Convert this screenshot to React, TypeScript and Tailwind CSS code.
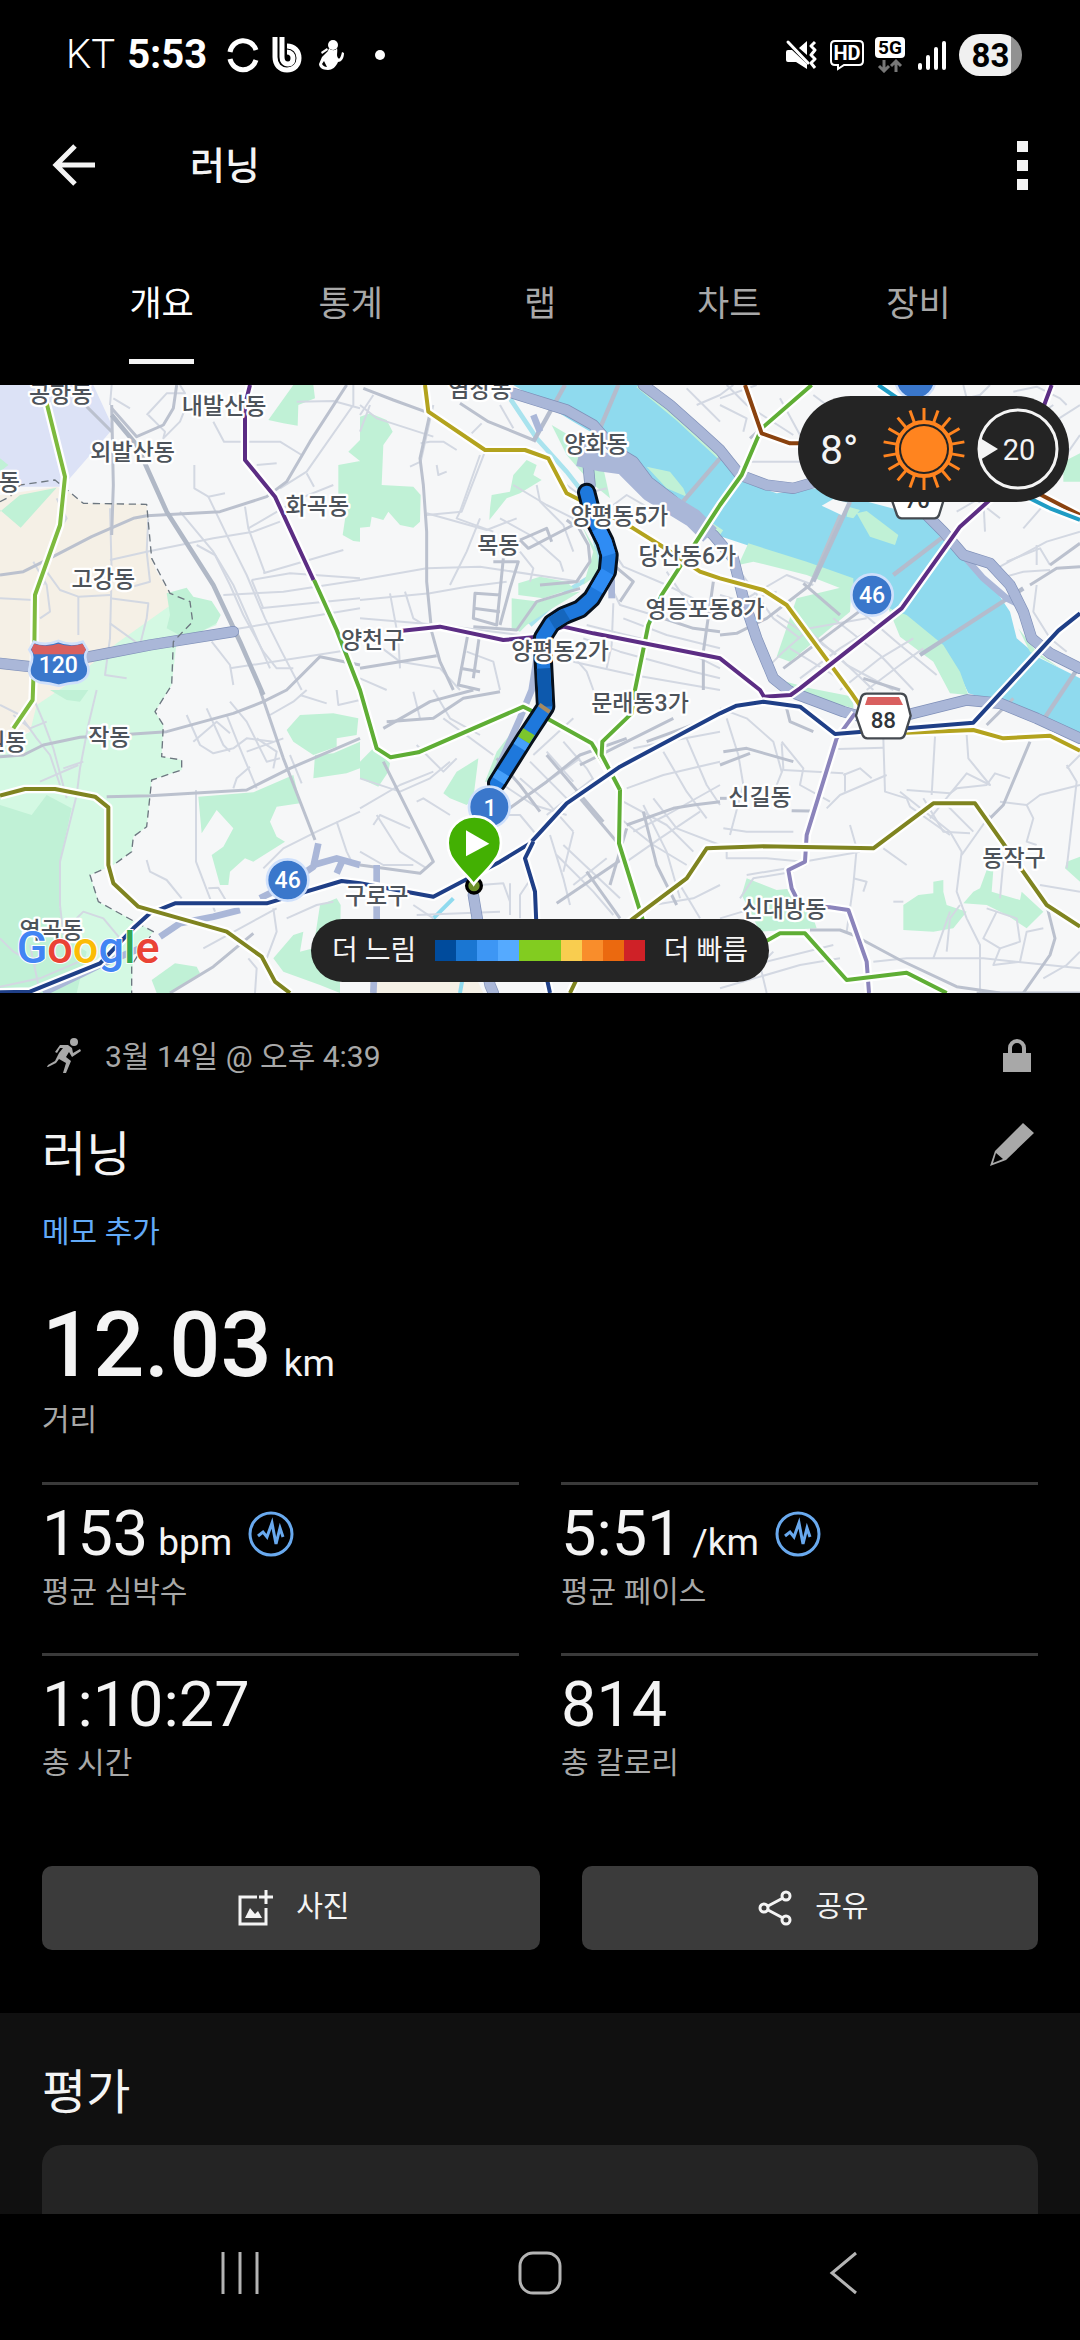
import { useState } from 'react';

type Stat = {
  label: string;
  value: string;
  unit?: string;
  hasChart?: boolean;
};

type MapLine = { color: string; points: string };
type MapLabel = { x: number; y: number; text: string };

const tabs = ['개요', '통계', '랩', '차트', '장비'];

const stats: Stat[] = [
  { label: '평균 심박수', value: '153', unit: 'bpm', hasChart: true },
  { label: '평균 페이스', value: '5:51', unit: '/km', hasChart: true },
  { label: '총 시간', value: '1:10:27' },
  { label: '총 칼로리', value: '814' },
];

const paceColors = [
  'bg-[#004b9c]',
  'bg-[#1a76d2]',
  'bg-[#3d96f4]',
  'bg-[#55aaff]',
  'bg-[#82cc20]',
  'bg-[#82cc20]',
  'bg-[#f9cd4f]',
  'bg-[#f98d2b]',
  'bg-[#eb690f]',
  'bg-[#cf2127]',
];

// Map geometry is drawn on a 3240 x 1824 canvas.
const parks = [
  '805,105 880,0 940,0 945,40 895,60 893,122 850,115',
  '1045,200 1080,165 1080,470 1060,468 1028,450 1040,370 1015,330 1015,240 1080,228',
  '1080,95 1110,85 1160,105 1178,140 1150,180 1145,300 1240,305 1262,330 1260,410 1240,428 1200,420 1165,380 1150,405 1115,395 1110,425 1080,428',
  '1470,370 1475,330 1530,320 1540,270 1580,225 1610,240 1600,270 1625,285 1560,325 1520,340 1468,405',
  '1555,595 1620,575 1700,590 1720,610 1630,640 1555,630',
  '1535,640 1620,650 1700,625 1740,620 1640,680 1580,720 1560,740 1535,730',
  '860,1035 900,990 1000,985 1075,1000 1070,1050 1010,1060 1010,1085 940,1110 880,1070',
  '945,1110 1000,1105 1080,1070 1080,1150 1040,1165 940,1180',
  '595,1235 760,1222 880,1170 895,1230 900,1255 830,1265 810,1310 830,1355 855,1370 760,1430 735,1420 690,1460 685,1500 660,1500 635,1410 670,1385 700,1330 650,1275 605,1345',
  '820,1720 880,1650 910,1640 900,1700 940,1690 960,1560 1010,1540 1022,1560 1020,1700 1020,1824 960,1800 850,1760',
  '455,1785 525,1735 590,1745 600,1765 510,1824 470,1824',
  '1080,1130 1120,1090 1170,1135 1165,1160 1135,1205 1080,1180',
  '1330,1225 1370,1160 1435,1120 1420,1240 1400,1260 1350,1240',
  '1455,1190 1490,1100 1560,1010 1530,1090 1480,1190',
  '1655,120 1740,170 1810,250 1830,340 1770,290 1700,210',
  '1745,420 1790,500 1800,560 1750,600 1780,500',
  '1940,245 2010,260 2050,310 2060,335 2000,310',
  '2245,475 2420,530 2560,580 2560,625 2420,570 2260,530 2215,540',
  '2390,640 2555,600 2550,680 2370,830 2330,815',
  '2570,385 2600,378 2695,450 2685,480 2610,455',
  '2545,365 2580,375 2560,400 2540,395',
  '2665,670 2720,690 2830,780 2880,860 2905,930 2850,925 2800,830 2700,755',
  '3055,730 3110,800 3180,850 3090,800',
  '3190,230 3240,205 3240,290 3190,290',
  '2320,880 2430,910 2560,935 2560,970 2400,930',
  '2225,1530 2240,1480 2330,1515 2385,1510 2440,1600 2450,1630 2280,1640',
  '2710,1560 2755,1530 2800,1525 2800,1490 2830,1485 2830,1520 2840,1560 2900,1580 2860,1630 2800,1640 2710,1635',
  '2890,1555 2920,1520 2940,1510 2960,1455 2980,1455 2975,1520 3060,1545 3065,1520 3130,1580 3080,1630 3020,1590 2960,1560',
  '3200,1430 3240,1415 3240,1490 3195,1450',
];

const minorRoads = [
  '440,90 500,25 555,25 540,0',
  '445,90 495,140 490,160 540,110 560,60',
  '640,110 672,170 840,170 905,210',
  '890,50 1000,48 1080,70',
  '770,240 830,235',
  '1060,0 1060,60 920,260 840,310',
  '920,265 942,305',
  '583,240 583,310 625,335 675,325',
  '625,335 690,470 740,570 795,700 845,800 905,915',
  '330,525 440,500 540,480 640,460 760,440 840,410',
  '735,365 745,430 795,565',
  '745,430 900,340 1000,300',
  '790,565 1030,495',
  '755,585 870,565 1080,580',
  '670,630 850,620 1080,585',
  '780,670 1080,640',
  '690,735 780,720 1080,670',
  '690,850 1080,790',
  '540,380 640,500 700,600 810,850',
  '635,770 690,840 700,900',
  '590,480 645,510 690,600 730,690 790,800 830,850 880,850',
  '755,585 790,670',
  '330,370 335,560 330,760 315,870 380,880',
  '140,560 180,615 235,635 330,630',
  '235,635 235,750',
  '330,640 445,655 440,700 420,780 330,715',
  '445,400 440,500 450,590 380,610',
  '0,640 100,645',
  '100,530 140,600 150,680 120,700',
  '330,60 335,0',
  '340,40 390,70',
  '170,340 200,400 150,480 130,600',
  '290,915 265,1020 240,1150 230,1230 180,1430 180,1560 190,1650',
  '0,960 60,990 110,1060 150,1110 180,1200',
  '90,915 130,1010 160,1090 200,1240',
  '40,990 90,1030 140,1010',
  '120,1190 235,1140',
  '190,1150 250,1130',
  '560,990 600,1080 640,1105 700,1090 740,1060 820,1070',
  '620,970 670,1080 690,1100',
  '580,1070 650,1010 690,1045',
  '680,990 720,1090 770,1210',
  '690,950 740,1010 800,1130 840,1120',
  '770,1060 830,1100 820,1150',
  '740,1100 850,1060',
  '810,990 880,950 920,915',
  '700,1210 710,1180 750,1145',
  '900,930 980,955',
  '1010,915 1015,960 1080,945',
  '588,1215 588,1430 630,1540 645,1580',
  '440,1425 450,1460 500,1485 545,1540',
  '625,1510 655,1508 680,1550',
  '870,1110 905,1195',
  '1010,1310 1040,1400 1060,1440',
  '790,1450 850,1390 950,1340 1080,1280',
  '610,1690 830,1570',
  '820,1570 830,1640 800,1720',
  '745,1720 770,1750 765,1824',
  '90,1680 120,1824',
  '0,1805 120,1780 260,1720',
  '190,1640 250,1580 310,1600 360,1660',
  '0,1660 40,1700 110,1740',
  '860,1600 950,1560 1000,1550',
  '1080,60 1130,100 1300,155',
  '1230,245 1262,230 1300,60',
  '1370,195 1330,170 1290,170 1262,175',
  '1310,240 1315,270 1340,260',
  '1415,145 1445,115',
  '1455,200 1385,380 1280,390',
  '1280,385 1460,435 1550,400',
  '1440,210 1380,380 1370,400 1480,440',
  '1080,585 1280,550 1440,545 1740,590',
  '1080,645 1290,625 1400,605 1520,590',
  '1080,700 1320,720 1560,750',
  '1080,740 1200,830 1320,850 1380,915',
  '1170,625 1195,760 1200,850',
  '1215,620 1240,700 1290,730',
  '1440,400 1400,500 1350,600',
  '1540,300 1640,360 1720,400',
  '1610,300 1620,350 1690,420 1720,500',
  '1500,400 1590,450 1680,530 1690,560',
  '1560,500 1600,550 1590,590',
  '1080,880 1160,915',
  '1400,800 1480,830 1500,915',
  '1120,30 1080,90',
  '1500,60 1540,130',
  '1080,140 1110,60',
  '1700,300 1740,330 1820,310',
  '1840,360 1880,330 2000,400',
  '1840,500 1870,545 2000,600 2080,640',
  '1830,600 1860,660 1960,690',
  '1840,655 1835,780 1820,850',
  '1870,700 2000,750 2160,790',
  '1760,720 1840,740 2000,780 2060,800 2160,850',
  '1690,780 1760,860 1780,915',
  '1750,760 1860,800 2080,860 2160,880',
  '1720,830 1900,870 2160,915',
  '2000,560 2040,620 2100,700',
  '2060,10 2110,60 2160,110',
  '2090,60 2160,30 2200,0',
  '2160,60 2240,100 2230,140',
  '2160,40 2270,0',
  '2180,0 2240,60 2380,150',
  '2340,40 2400,150 2450,210',
  '2440,30 2520,90',
  '2250,230 2400,230 2470,240',
  '2890,0 2900,40 2940,30 2970,0',
  '3040,20 3110,5 3180,40 3200,60',
  '3080,60 3130,80 3160,60',
  '3130,130 3240,60',
  '3170,250 3240,150',
  '2950,340 2955,440',
  '2870,380 2930,345 3000,400',
  '3070,430 3140,350',
  '2990,550 3140,470 3240,440',
  '3020,530 3120,490 3150,540',
  '3110,480 3110,540',
  '3110,600 3100,680 3150,760 3200,800',
  '3040,620 3000,580 3070,560 3150,555',
  '2220,560 2250,600 2320,700 2400,760',
  '2240,640 2360,570 2440,600',
  '2200,540 2230,620 2260,760',
  '2160,630 2230,650 2330,620',
  '2330,690 2500,800 2620,915',
  '2370,790 2500,870 2560,915',
  '2430,740 2540,840 2680,915',
  '2500,700 2640,810 2740,915',
  '2560,660 2700,780 2810,870',
  '2300,850 2350,800 2430,730 2600,700',
  '2400,880 2520,790 2680,690',
  '2520,915 2640,820 2740,760',
  '2600,915 2700,840 2770,790',
  '2180,1000 2215,1110 2230,1200 2190,1350',
  '2160,970 2240,1000 2320,1070 2345,1160',
  '2345,1075 2350,1150 2330,1200 2360,1240',
  '2345,1070 2410,1150 2400,1200 2490,1250',
  '2350,1155 2530,1165',
  '2515,1092 2650,1088',
  '2530,1170 2580,1150 2615,1180',
  '2535,1165 2535,1220',
  '2650,1060 2655,1220 2720,1240 2730,1265 2850,1350',
  '2805,1055 2795,1230',
  '2900,1050 2905,1120 2970,1200 2900,1165 2790,1300',
  '2480,1270 2520,1230 2660,1170',
  '2720,1215 2850,1225 2870,1210 2960,1200 2985,1165 3030,1180',
  '2770,1240 2830,1340 2910,1345',
  '2840,1260 2920,1340',
  '2700,1220 2850,1340 2885,1400 2870,1520 2900,1600 2940,1680 2940,1824',
  '2970,1290 2885,1410',
  '3000,1250 3080,1260 3120,1230 3240,1200',
  '3080,1260 3100,1300 3080,1370 3110,1380',
  '3200,1150 3240,1110',
  '3200,1140 3230,1190 3200,1450',
  '2550,1320 2570,1390 2560,1500 2540,1640',
  '2170,1330 2240,1340 2380,1340',
  '2180,1400 2180,1420 2300,1420 2410,1430 2580,1400',
  '2240,1470 2300,1460 2420,1440',
  '2560,1480 2600,1490 2590,1520',
  '2650,1390 2720,1440',
  '2220,1540 2260,1480 2380,1460',
  '2160,1600 2260,1570 2280,1560',
  '2160,1810 2400,1740 2520,1720',
  '2220,1750 2500,1680',
  '2620,1730 2720,1720 2950,1720 3240,1750',
  '2990,1580 2950,1660 3000,1690 3060,1670 3050,1600 2960,1570',
  '3000,1690 2980,1740 3060,1730 3080,1640 3130,1630',
  '3120,1500 3240,1520',
  '3130,1780 3200,1740 3240,1700',
  '2840,1700 2850,1600 2880,1560',
  '2850,1580 2800,1720',
  '2680,1550 2710,1550',
  '2300,1824 2280,1740 2320,1700',
  '3010,1430 3000,1540',
  '1120,1320 1140,1290 1230,1330',
  '1130,1290 1200,1400 1280,1450',
  '1080,1270 1200,1200 1300,1160',
  '1080,1180 1200,1220 1290,1180 1350,1130',
  '1250,1250 1270,1240 1350,1290',
  '1330,1000 1480,1110',
  '1250,1080 1330,1160 1370,1120',
  '1240,920 1260,1000',
  '1300,915 1350,1000 1440,1050',
  '1490,1290 1560,1290 1610,1350',
  '1510,1200 1600,1260 1700,1290',
  '1560,1180 1640,1250 1720,1340',
  '1590,1130 1700,1240',
  '1640,1100 1720,1190',
  '1690,1070 1760,1150 1790,1200',
  '1600,1220 1740,1120',
  '1640,1290 1780,1180',
  '1720,1000 1600,1110',
  '1670,1410 1780,1520 1840,1590',
  '1690,1380 1860,1540',
  '1600,1470 1560,1530 1560,1600',
  '1440,1500 1510,1495 1530,1550',
  '1530,1495 1530,1590',
  '1650,1350 1690,1480 1710,1560',
  '1720,1340 1690,1460',
  '1860,1300 1960,1380 2060,1440',
  '1870,1250 2000,1320 2080,1400',
  '1930,1260 2000,1400 2040,1540',
  '1900,1340 2000,1290 2160,1200',
  '1880,1430 1980,1360 2100,1280',
  '1960,1240 2030,1330 2160,1380',
  '1880,1210 1990,1170 2160,1130',
  '1990,1100 2060,1220 2120,1300',
  '1900,1090 2000,1070 2160,1040',
  '2060,1060 2120,1200 2160,1260',
  '1080,1400 1150,1440 1240,1440',
  '1960,1560 2080,1540 2160,1500',
  '2040,1500 2100,1600',
  '1720,1500 1820,1420',
  '1250,1590 1500,1580',
  '1240,1560 1300,1600',
];

const majorRoads = [
  '260,65 335,140',
  '335,60 340,300 335,450',
  '335,70 410,155 490,120 520,70 530,0',
  '0,570 70,560 130,530 275,455 400,400 440,392 660,380 800,335 860,290 930,170 1040,0',
  '0,1115 70,1110 130,1080 240,1057 400,1047 500,1040 700,985 790,950 860,915 960,815 1080,840',
  '320,1235 450,1232 740,1215 790,1190 870,1150 1080,1060',
  '780,915 850,1120 945,1365',
  '1090,10 1180,45 1290,85 1260,220 1270,300 1280,440 1280,590 1295,740 1320,830 1360,915',
  '1380,55 1465,110 1600,165',
  '1080,850 1310,812',
  '1560,465 1585,490 1720,420 1700,405',
  '1560,465 1640,430 1655,470',
  '1480,530 1555,530 1530,610 1500,720',
  '1510,520 1490,720 1420,700 1425,625 1500,630',
  '1420,670 1500,680',
  '1405,740 1375,900 1440,915',
  '1440,740 1420,880',
  '1420,725 1550,735 1610,650 1740,610',
  '1620,600 1730,590 1770,530 1765,480 1720,400',
  '1380,850 1440,860',
  '1840,540 1900,590 1860,650',
  '2140,590 2110,800 2110,915',
  '1960,690 2080,730 2160,740',
  '2250,160 2340,80',
  '2410,595 2520,690',
  '2160,750 2210,745 2300,700 2430,600 2520,390',
  '2350,850 2590,670',
  '2590,880 2700,915',
  '1940,1070 2160,990',
  '1740,1140 1900,1060 2020,1000',
  '1150,1030 1290,950 1420,915',
  '1160,1010 1300,1000 1390,940 1500,920',
  '1500,1290 1640,1190 1740,1110 1880,1060',
  '1490,1120 1560,1200 1620,1280',
  '1640,1110 1810,1310',
  '1150,1130 1240,1310 1300,1430 1260,1465 1080,1440',
  '1740,1240 1850,1370',
  '1670,1555 1870,1420',
  '1760,1460 1860,1600',
  '1930,1280 1970,1440 2030,1560',
  '1880,1320 2020,1270 2080,1260 2160,1250',
  '1830,1500 1880,1330',
  '2380,1130 2240,1090 2170,1100',
  '2360,970 2370,1010 2440,1040',
  '2160,1140 2250,1105',
  '2160,1240 2180,1240',
  '2375,1277 2430,1278',
  '3090,1070 3010,1260 2970,1300',
  '3140,1560 3165,1660 3150,1710 3070,1824',
  '2430,1635 2520,1635 2560,1650 2700,1725 2870,1805 3000,1824',
  '2930,1824 3240,1824',
  '510,1824 640,1745 760,1645',
  '3150,540 3240,475',
  '3090,600 3170,550 3240,545',
  '2960,1020 3040,940',
];

const highways = [
  '1540,25 1620,50 1700,75 1780,120 1850,200 1900,230 1945,290 2010,340 2080,400 2140,450 2200,520 2230,640 2270,760 2320,880 2370,920',
  '1760,190 1770,300',
  '1930,0 2010,60 2100,140 2160,195 2220,270 2300,300 2380,310 2450,290',
  '2780,390 2830,440 2890,510 2970,535 3030,600 3070,680 3095,760 3150,805 3240,850',
  '2370,920 2450,950 2530,980 2600,1000 2720,990 2900,945 3000,955 3110,1000 3240,1060',
  '0,835 90,845 270,815 450,780 700,740',
  '1420,1530 1440,1650 1470,1800 1480,1824',
];

const highwayRamps = [
  '1600,90 1620,140',
  '2880,500 2950,580 3020,640 3060,660',
  '1835,560 1835,640',
  '130,1824 300,1740 420,1690',
  '480,1655 540,1615 640,1595 720,1575',
  '780,1540 860,1500 940,1445 955,1375',
  '940,1440 1010,1420 1080,1440',
  '1130,1440 1130,1600 1120,1824',
  '1610,820 1595,915 1560,1000 1520,1090 1480,1180',
  '1010,1465 1030,1420',
];

const bridges = [
  '1695,0 1600,170',
  '1855,0 1800,130',
  '2160,220 2040,360',
  '2550,350 2440,590',
  '2830,455 2680,570',
  '3070,610 2760,810',
  '3240,840 3120,1020',
];

const metroLines: MapLine[] = [
  { color: '#8b84bb', points: '2565,985 2510,1060 2420,1350 2415,1430 2365,1455 2375,1510 2400,1560 2490,1567 2545,1575 2600,1730 2607,1824' },
  { color: '#7dba3e', points: '140,55 195,275 180,420 105,630 103,790 98,945 40,1030' },
  { color: '#5c2d84', points: '750,0 735,60 735,225 825,335 942,588' },
  { color: '#5fae35', points: '942,585 1010,735 1080,915 1130,1090 1172,1117 1255,1102 1570,965 1640,1000 1775,1075 1860,1215 1857,1375 1930,1610' },
  { color: '#5fae35', points: '2435,0 2285,130 2225,270 2160,360 1985,630 1945,720 1905,915 1895,985 1807,1070 1805,1110 1860,1215' },
  { color: '#b3a31e', points: '1275,0 1285,80 1455,195 1575,195 1645,220 1700,325 1750,350 1900,430 1980,480 2100,560 2160,580 2290,615 2360,660 2555,925 2620,1020 2720,1043 2920,1035 3010,1060 3150,1052 3240,1097' },
  { color: '#5c2d84', points: '1200,738 1320,725 1510,765 1600,757 1690,725 1780,745 2160,820 2280,915 2292,935 2372,930 2400,910 2705,670 2880,425 2975,340 3110,120 3155,0' },
  { color: '#1f3f87', points: '0,1822 90,1820 300,1735 400,1630 450,1585 525,1555 800,1555 1025,1488 1080,1495 1300,1535 1500,1430 1590,1375 1700,1255 1860,1145 2160,985 2210,962 2290,950 2400,965 2505,1047 2920,1013 3175,737 3240,685' },
  { color: '#1f3f87', points: '1600,1370 1575,1420 1605,1520 1610,1640 1650,1824' },
  { color: '#7f8420', points: '0,1232 75,1212 165,1212 285,1235 325,1267 325,1440 340,1495 415,1565 680,1640 785,1715 825,1790 870,1824' },
  { color: '#7f8420', points: '1710,1824 1760,1720 1900,1600 2060,1480 2120,1390 2160,1388 2290,1384 2620,1390 2800,1255 2925,1255 3140,1560 3240,1625' },
  { color: '#5fae35', points: '2260,1690 2340,1645 2415,1645 2540,1785 2720,1763 2840,1824' },
  { color: '#8a420f', points: '2235,0 2285,145 2370,175 2420,175' },
  { color: '#8a420f', points: '3105,320 3240,390' },
  { color: '#1f9cc4', points: '2635,0 2700,45' },
  { color: '#1f9cc4', points: '3080,335 3150,370 3240,405' },
];

const mapLabels: MapLabel[] = [
  { x: 182, y: 52, text: '공항동' },
  { x: 672, y: 86, text: '내발산동' },
  { x: 398, y: 225, text: '외발산동' },
  { x: 28, y: 315, text: '동' },
  { x: 952, y: 387, text: '화곡동' },
  { x: 310, y: 605, text: '고강동' },
  { x: 1118, y: 788, text: '양천구' },
  { x: 1440, y: 36, text: '염창동' },
  { x: 1788, y: 200, text: '양화동' },
  { x: 1858, y: 417, text: '양평동5가' },
  { x: 1495, y: 505, text: '목동' },
  { x: 2062, y: 537, text: '당산동6가' },
  { x: 2115, y: 697, text: '영등포동8가' },
  { x: 1680, y: 823, text: '양평동2가' },
  { x: 1920, y: 978, text: '문래동3가' },
  { x: 16, y: 1096, text: '원동' },
  { x: 328, y: 1080, text: '작동' },
  { x: 154, y: 1658, text: '역곡동' },
  { x: 1130, y: 1556, text: '구로구' },
  { x: 2280, y: 1260, text: '신길동' },
  { x: 2352, y: 1597, text: '신대방동' },
  { x: 3042, y: 1443, text: '동작구' },
];

const routePoints =
  '1760,322 1780,400 1815,470 1827,510 1822,560 1775,640 1740,672 1690,692 1655,715 1628,758 1630,830 1637,965 1575,1060 1490,1195';

const sunRays = Array.from({ length: 18 }, (_, index) => index * 20);

function StatusBar() {
  return (
    <div className="flex h-[110px] items-center justify-between pl-[66px] pr-[58px] text-white">
      <div className="flex items-center">
        <span className="text-[40px] font-light">KT</span>
        <span className="ml-3 text-[40px] font-bold">5:53</span>
        <svg className="ml-5 h-9 w-8" viewBox="0 0 32 36" fill="none" stroke="currentColor" strokeWidth="5">
          <path d="M3 15a13.500 14 0 0 1 26-2M3 22a13.500 14 0 0 0 26 1" />
        </svg>
        <svg className="ml-3 h-9 w-8" viewBox="0 0 32 36" fill="none" stroke="currentColor">
          <path strokeWidth="5" d="M4 0v20c0 8 5 13 12 13s12-5 12-12-5-12-12-12" />
          <path strokeWidth="5" d="M11 0v20c0 4 2 7 6 7s5-3 5-6-2-6-6-6" />
        </svg>
        <svg className="ml-3 h-9 w-8" viewBox="0 0 32 36" fill="currentColor">
          <circle cx="18" cy="8" r="5" />
          <path d="M14 11c2 3 7 3 8 0 1 4-1 7 1 10 2 2 3-2 4-6l2 1c0 6-3 9-6 9-2 5-6 8-10 8-6 0-9-3-9-6l3-7 6-6c0-1 1-2 1-3Zm-7 16c1 2 3 3 5 3l-3-6Z" />
          <path d="m6 15 6-4 1 2-6 4Z" />
        </svg>
        <span className="ml-7 size-[10px] rounded-full bg-white" />
      </div>

      <div className="flex items-center">
        <svg className="h-8 w-8" viewBox="0 0 32 32" fill="currentColor">
          <path d="M3 11h4l15 14v5L11 23H3a2 2 0 0 1-2-2v-8a2 2 0 0 1 2-2ZM22 2v14l-8-7Z" />
          <path d="m3 3 20 21" stroke="currentColor" strokeWidth="3" strokeLinecap="round" />
          <path
            d="m30 3-4 4 4 4-4 5 4 4-4 4 4 5"
            fill="none"
            stroke="currentColor"
            strokeWidth="3"
            strokeLinejoin="round"
          />
        </svg>
        <svg className="ml-3 h-8 w-9" viewBox="0 0 36 32" fill="none" stroke="currentColor">
          <path strokeWidth="2" d="M6 2h24q4 0 4 4v16q0 4-4 4H15l-6 4v-4H6q-4 0-4-4V6q0-4 4-4Z" />
          <text x="18" y="21" textAnchor="middle" fontSize="20" fontWeight="700" fill="currentColor" stroke="none">
            HD
          </text>
        </svg>
        <svg className="ml-[10px] h-9 w-[30px]" viewBox="0 0 30 36">
          <rect width="30" height="21" rx="4" fill="#fff" />
          <text x="15" y="17" textAnchor="middle" fontSize="19" fontWeight="700" fill="#000">
            5G
          </text>
          <path d="M9 23v11m-5-5 5 5 5-5M21 35V24m-5 5 5-5 5 5" fill="none" stroke="#777" strokeWidth="3" />
        </svg>
        <svg className="ml-3 h-8 w-[30px]" viewBox="0 0 30 32" fill="none" stroke="currentColor" strokeWidth="4" strokeLinecap="round">
          <path d="M3 26v3M11 18v11M19 10v19M27 4v25" />
        </svg>
        <span className="ml-3 flex h-[42px] w-[63px] items-center justify-center rounded-full bg-linear-to-r from-[#f0f0f0] from-82% to-[#919191] to-82% text-[33px] font-bold leading-none text-black">
          83
        </span>
      </div>
    </div>
  );
}

function AppHeader() {
  return (
    <header className="flex h-[110px] items-center pl-[50px] pr-[40px] text-[#f4f4f4]">
      <button type="button" aria-label="뒤로" className="size-12">
        <svg viewBox="0 0 48 48" fill="none" stroke="currentColor" strokeWidth="5">
          <path d="M45 24H7M25 5 6 24l19 19" />
        </svg>
      </button>
      <h1 className="ml-[92px] grow pt-[3px] text-[38px] font-medium">러닝</h1>
      <button type="button" aria-label="더보기" className="flex h-16 w-[36px] flex-col items-center justify-center gap-2">
        <span className="size-[11px] bg-current" />
        <span className="size-[11px] bg-current" />
        <span className="size-[11px] bg-current" />
      </button>
    </header>
  );
}

function CityMap() {
  return (
    <svg className="h-full w-full" viewBox="0 0 3240 1824" preserveAspectRatio="xMidYMid slice" role="img" aria-label="경로 지도">
      <rect width="3240" height="1824" fill="#f6f7f8" />
      <path d="M0 0H280L340 130 205 285 200 305 0 305Z" fill="#dce2f6" />
      <path d="M0 330 170 305 205 320 250 355 440 358 445 500 470 560 510 625 505 690 200 910 90 1040 0 1060Z" fill="#f5f0e6" />
      <path
        d="M505 665 640 690 650 720 530 770 515 900 465 980 490 1020 485 1115 545 1125 545 1155 455 1185 440 1325 400 1355 395 1400 340 1440 270 1470 295 1550 460 1640 400 1700 395 1824H0V1090L90 1040 110 960 200 900 350 775Z"
        fill="#d4f9e3"
      />
      <path d="M500 625 560 608 580 635 635 648 662 690 650 715 560 762 500 730 510 690Z" fill="#c0f1d6" />
      <path d="M0 380 60 330 170 308 62 428 0 375ZM0 220 25 240 0 260ZM150 915H265L240 950 200 945Z" fill="#c0f1d6" />
      <path d="M0 1260 95 1290 140 1230 215 1270 180 1430 178 1570 130 1510 180 1570 185 1650 260 1700 230 1824H0Z" fill="#c0f1d6" />
      <path d="M1110 1790 1400 1720 1450 1824H1110Z" fill="#f5f0e6" />

      <path
        d="M1540 0H1915L2160 220 2230 290 2330 325 2450 310 2790 400 2850 460 2900 530 2970 590 3030 680 3050 760 3120 820 3240 880V1065L3100 985 2990 950 2905 925 2870 850 2800 780 2700 690 2560 600 2420 555 2240 480 2120 440 2010 350 1930 290 1840 180 1720 110Z"
        fill="#8fdaee"
      />
      <path d="M2465 362 2500 342 2550 355 2535 395Z" fill="#f6f7f8" />
      <path d="M1530 40 1610 160 1700 260 1770 350M1780 440 1795 510 1780 570 1700 620 1590 720" fill="none" stroke="#a9e3ee" strokeWidth="14" />
      <path d="M1380 1824 1420 1600M1300 1600 1360 1540" fill="none" stroke="#8fdaee" strokeWidth="12" />
      <path d="M1850 190 1930 285 2040 370 2160 450" fill="none" stroke="#c4f2d6" strokeWidth="34" />
      <path d="M1915 0 2030 95 2160 215" fill="none" stroke="#c4f2d6" strokeWidth="18" />

      {parks.map((points) => (
        <polygon key={points} points={points} fill="#c0f1d6" />
      ))}

      <g fill="none" strokeLinejoin="round">
        {minorRoads.map((points) => (
          <polyline key={points} points={points} stroke="#d3d8e2" strokeWidth="6" />
        ))}
        {majorRoads.map((points) => (
          <polyline key={points} points={points} stroke="#bbc1ce" strokeWidth="9" />
        ))}
        <path d="M335 90 410 180 500 380 640 600 720 770 790 930" stroke="#b0b8c6" strokeWidth="14" />
        {bridges.map((points) => (
          <polyline key={points} points={points} stroke="#b4bccd" strokeWidth="13" />
        ))}
        {highwayRamps.map((points) => (
          <polyline key={points} points={points} stroke="#aab7d8" strokeWidth="20" />
        ))}
        {highways.map((points) => (
          <polyline key={points} points={points} stroke="#7f90b8" strokeWidth="34" strokeLinecap="round" />
        ))}
        {highways.map((points) => (
          <polyline key={points} points={points} stroke="#aab7d8" strokeWidth="30" strokeLinecap="round" />
        ))}
        <path d="M1735 215 1800 230 1870 240 1950 320 2080 400 2130 450" stroke="#aab7d8" strokeWidth="58" />
        <path
          d="M0 350 30 335 60 300 165 285 250 355 440 358 455 520 510 625 570 650 578 710 520 770 515 900 465 980 490 1020 485 1115 545 1125 545 1155 455 1185 440 1325 400 1355 395 1400 340 1440 270 1470 295 1550 395 1605 460 1640 395 1740 395 1824"
          stroke="#6d7780"
          strokeWidth="4"
          strokeDasharray="22 14"
        />
        {metroLines.map((line) => (
          <g key={line.points}>
            <polyline points={line.points} stroke="#fff" strokeWidth="26" />
            <polyline points={line.points} stroke={line.color} strokeWidth="12" />
          </g>
        ))}
      </g>

      <g fill="none" strokeLinejoin="round">
        <polyline points={routePoints} stroke="#07101c" strokeWidth="58" strokeLinecap="round" />
        <polyline points={routePoints} stroke="#1e78dc" strokeWidth="40" strokeLinecap="round" />
        <path d="M1795 430 1815 470 1827 510M1822 560 1790 615" stroke="#2f8cf4" strokeWidth="40" />
        <path d="M1700 688 1655 715" stroke="#1566bd" strokeWidth="40" />
        <path d="M1630 850 1637 965" stroke="#0d59ad" strokeWidth="40" />
        <path d="M1637 965 1630 975" stroke="#a78a60" strokeWidth="38" />
        <path d="M1587 1040 1571 1066" stroke="#7cc62c" strokeWidth="40" />
        <path d="M1571 1066 1558 1087M1510 1163 1495 1187" stroke="#46a0fa" strokeWidth="40" />
      </g>

      <g
        fontSize="69"
        fontWeight="500"
        fill="#4d535a"
        stroke="#fff"
        strokeWidth="14"
        strokeLinejoin="round"
        textAnchor="middle"
        paintOrder="stroke"
      >
        {mapLabels.map((label) => (
          <text key={label.text} x={label.x} y={label.y}>
            {label.text}
          </text>
        ))}
      </g>

      <g fontWeight="500" textAnchor="middle">
        <g fill="#3a77cb" stroke="#cfe0fb" strokeWidth="8">
          <circle cx="2616" cy="630" r="62" />
          <circle cx="863" cy="1485" r="62" />
          <circle cx="1468" cy="1266" r="61" />
          <circle cx="2746" cy="-18" r="60" />
          <path d="M102 770q35 14 73-2 38 16 73 2l14 24q-14 20 2 50 8 34-30 48-30 2-58 10-26-8-56-10-40-14-30-48 14-30-2-50Z" />
        </g>
        <path d="M102 776q35 12 73 0 38 12 73 0l10 18-8 14H102l-8-14Z" fill="#d9605f" />
        <g fontSize="69" fill="#fff">
          <text x="2616" y="654">46</text>
          <text x="863" y="1509">46</text>
          <text x="1470" y="1292">1</text>
          <text x="175" y="863">120</text>
        </g>
        <g fill="#fff" stroke="#454a50" strokeWidth="7" strokeLinejoin="round">
          <path d="M2600 926h102q12 0 16 10l14 56-18 58q-4 10-14 10h-98q-10 0-14-10l-20-58 16-56q4-10 16-10Z" />
          <path d="M2703 266h102q12 0 16 10l14 56-18 58q-4 10-14 10h-98q-10 0-14-10l-20-58 16-56q4-10 16-10Z" />
        </g>
        <path d="M2603 936h94l12 24h-114Z" fill="#d9605f" />
        <g fontSize="67" fill="#30353a">
          <text x="2650" y="1028">88</text>
          <text x="2752" y="369">70</text>
        </g>
      </g>

      <circle cx="1422" cy="1502" r="22" fill="#6d8f2a" stroke="#000" strokeWidth="10" />
      <path
        d="M1423 1294c-46 0-80 36-80 80 0 30 12 46 28 66 20 26 36 38 50 58 14-20 34-34 54-60 16-20 28-36 28-64 0-44-34-80-80-80Z"
        fill="#43b003"
        stroke="#fff"
        strokeWidth="8"
      />
      <path d="m1398 1336 70 40-70 38Z" fill="#fff" />

      <text x="50" y="1734" fontSize="135" fontWeight="500" stroke="#fff" strokeWidth="6" paintOrder="stroke">
        <tspan fill="#4285f4">G</tspan>
        <tspan fill="#ea4335">o</tspan>
        <tspan fill="#fbbc05">o</tspan>
        <tspan fill="#4285f4">g</tspan>
        <tspan fill="#34a853">l</tspan>
        <tspan fill="#ea4335">e</tspan>
      </text>
    </svg>
  );
}

function WeatherBadge() {
  return (
    <div className="absolute right-[11px] top-[11px] flex h-[106px] w-[271px] items-center rounded-full bg-[#242424] pl-[22px] pr-[9px] text-[#f4f4f4]">
      <span className="grow pt-1 text-[41px]">8°</span>
      <svg className="size-[84px]" viewBox="-42 -42 84 84">
        <circle r="23" fill="#ff841f" />
        <circle r="27" fill="none" stroke="#ff841f" strokeWidth="4" />
        {sunRays.map((angle) => (
          <path key={angle} d="M0-28V-41" stroke="#ff841f" strokeWidth="3" transform={`rotate(${angle})`} />
        ))}
      </svg>
      <svg className="ml-[10px] size-[84px]" viewBox="-42 -42 84 84">
        <circle r="39" fill="none" stroke="#f4f4f4" strokeWidth="3" />
        <path d="M-38-11-20 0-38 11-40 0Z" fill="#f4f4f4" />
        <text y="11" x="1" textAnchor="middle" fontSize="29" fill="#f4f4f4">
          20
        </text>
      </svg>
    </div>
  );
}

function PaceLegend() {
  return (
    <div className="absolute bottom-[11px] left-1/2 flex h-[63px] w-[458px] -translate-x-1/2 items-center justify-between whitespace-nowrap rounded-full bg-[#242424] px-[21px] text-[28px] text-[#f4f4f4]">
      <span>더 느림</span>
      <div className="flex">
        {paceColors.map((color, index) => (
          <span key={index} className={`h-[21px] w-[21px] ${color}`} />
        ))}
      </div>
      <span>더 빠름</span>
    </div>
  );
}

function ChartBadge() {
  return (
    <svg className="ml-4 size-[46px] self-center" viewBox="0 0 46 46" fill="none" stroke="#69a9ee">
      <circle cx="23" cy="23" r="21" strokeWidth="3" />
      <path d="m10 25 5-4 4 5 5-14 4 21 4-16 3 9" strokeWidth="3" />
    </svg>
  );
}

function StatCell({ stat }: { stat: Stat }) {
  return (
    <div className="border-t-[3px] border-[#3a3a3a] pb-[41px] pt-[13px]">
      <dd className="flex h-[72px] items-baseline text-[#f4f4f4]">
        <span className="text-[63px] leading-[72px]">{stat.value}</span>
        {stat.unit ? <span className="ml-[10px] text-[37px] leading-none">{stat.unit}</span> : null}
        {stat.hasChart ? <ChartBadge /> : null}
      </dd>
      <dt className="mt-[2px] text-[30px] leading-10 text-[#a8a8a8]">{stat.label}</dt>
    </div>
  );
}

export default function App() {
  const [activeTab, setActiveTab] = useState('개요');

  return (
    <div className="flex min-h-screen flex-col bg-black font-['Roboto','Noto_Sans_CJK_KR',sans-serif]">
      <StatusBar />
      <AppHeader />

      <nav className="grid grid-cols-5 px-[67px] pt-[61px]">
        {tabs.map((tab) => (
          <button
            key={tab}
            type="button"
            onClick={() => setActiveTab(tab)}
            className={`justify-self-center pb-[21px] text-[35px] leading-[48px] ${
              tab === activeTab ? 'text-white' : 'text-[#a8a8a8]'
            }`}
          >
            {tab}
            <span className={`mt-[30px] block h-[5px] ${tab === activeTab ? 'bg-[#f4f4f4]' : 'bg-transparent'}`} />
          </button>
        ))}
      </nav>

      <div className="relative h-[608px] overflow-hidden">
        <CityMap />
        <WeatherBadge />
        <PaceLegend />
      </div>

      <main className="flex grow flex-col">
        <section className="px-[42px] pb-[63px] pt-[39px]">
          <div className="flex h-12 items-center text-[#a8a8a8]">
            <svg className="ml-[5px] h-9 w-[34px]" viewBox="0 0 34 36" fill="currentColor">
              <circle cx="27" cy="4" r="4" />
              <path d="M13 7h8l4 3 1 5 7-4 1 2-9 6-3-5-3 5 5 4-5 12h-3l3-10-7-4-3 4-8 4H0l1-2 7-4 4-8 4-5h-3l-3 5-2-1Z" />
            </svg>
            <span className="ml-6 grow text-[30px]">3월 14일 @ 오후 4:39</span>
            <svg className="mr-[7px] h-9 w-7" viewBox="0 0 28 36">
              <path d="M0 15h28v19H0Z" fill="currentColor" />
              <path d="M7 16V10a7 7 0 0 1 14 0v6" fill="none" stroke="currentColor" strokeWidth="4" />
            </svg>
          </div>

          <div className="mt-[43px] flex items-start justify-between">
            <h2 className="text-[48px] leading-[64px] text-[#f4f4f4]">러닝</h2>
            <button type="button" aria-label="이름 편집" className="mr-1">
              <svg className="h-[43px] w-[44px]" viewBox="0 0 44 43" fill="#a8a8a8">
                <path d="M33 0 44 10 16 37 0 43 5 28ZM6 30 3 40 13 36Z" fillRule="evenodd" />
              </svg>
            </button>
          </div>

          <button type="button" className="mt-[21px] block text-[30px] leading-[48px] text-[#62aaf8]">
            메모 추가
          </button>

          <div className="mt-[42px]">
            <p className="flex items-baseline text-[#f4f4f4]">
              <span className="text-[90px] font-medium leading-[96px]">12.03</span>
              <span className="ml-3 text-[37px] leading-none">km</span>
            </p>
            <p className="mt-[6px] text-[30px] leading-10 text-[#a8a8a8]">거리</p>
          </div>

          <dl className="mt-[42px] grid grid-cols-2 gap-x-[42px]">
            {stats.map((stat) => (
              <StatCell key={stat.label} stat={stat} />
            ))}
          </dl>

          <div className="mt-[42px] flex gap-[42px] text-[29px] text-[#f4f4f4]">
            <button type="button" className="flex h-[84px] flex-[83] items-center justify-center gap-[22px] rounded-[10px] bg-[#3b3b3b] pl-[6px]">
              <svg className="size-9" viewBox="0 0 36 36" fill="none" stroke="currentColor" strokeWidth="3">
                <path d="M19 7H2v27h26V18M28 0v14M21 7h14" />
                <path d="m7 28 5-10 5 6 3-3 4 7Z" fill="currentColor" stroke="none" />
              </svg>
              사진
            </button>
            <button type="button" className="flex h-[84px] flex-[76] items-center justify-center gap-[22px] rounded-[10px] bg-[#3b3b3b] pl-[6px]">
              <svg className="size-9" viewBox="0 0 36 36" fill="none" stroke="currentColor" strokeWidth="3">
                <circle cx="29" cy="6" r="4" />
                <circle cx="7" cy="18" r="4" />
                <circle cx="29" cy="30" r="4" />
                <path d="m11 16 15-8M11 20l15 8" />
              </svg>
              공유
            </button>
          </div>
        </section>

        <section className="flex grow flex-col bg-[#101010] px-[42px] pt-[48px]">
          <h2 className="text-[48px] leading-[64px] text-[#f4f4f4]">평가</h2>
          <div className="mt-5 min-h-[68px] grow rounded-t-[20px] bg-[#242424]" />
        </section>
      </main>

      <footer className="flex h-[126px] items-center justify-between px-[219px] pb-2 text-[#b4b4b4]">
        <button type="button" aria-label="최근 앱">
          <svg className="size-[44px]" viewBox="0 0 44 44" fill="none" stroke="currentColor" strokeWidth="3">
            <path d="M4 1v42M21 1v42M38 1v42" />
          </svg>
        </button>
        <button type="button" aria-label="홈">
          <svg className="size-[44px]" viewBox="0 0 44 44" fill="none" stroke="currentColor" strokeWidth="3">
            <rect x="2" y="2" width="40" height="40" rx="13" />
          </svg>
        </button>
        <button type="button" aria-label="뒤로 가기">
          <svg className="size-[44px]" viewBox="0 0 44 44" fill="none" stroke="currentColor" strokeWidth="3">
            <path d="M39 2 15 22l24 20" />
          </svg>
        </button>
      </footer>
    </div>
  );
}
